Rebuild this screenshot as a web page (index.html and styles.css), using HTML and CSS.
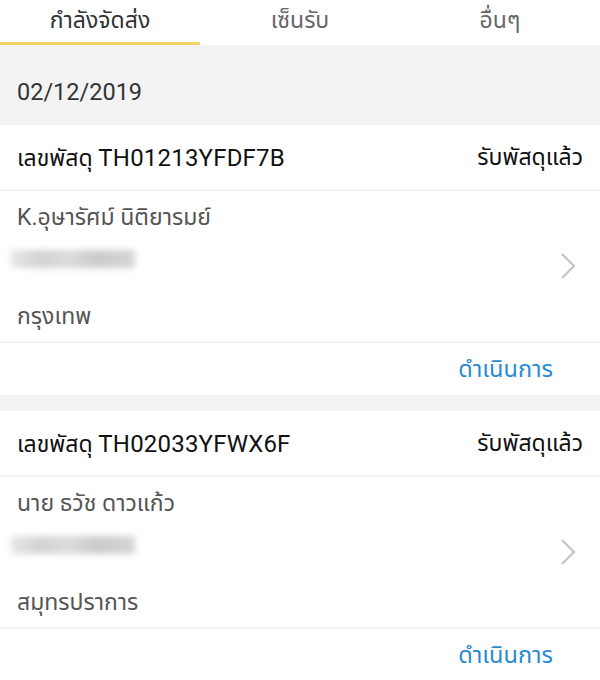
FILE: index.html
```html
<!DOCTYPE html>
<html lang="th">
<head>
    <meta charset="UTF-8">
    <meta name="viewport" content="width=device-width, initial-scale=1.0">
    <title>พัสดุ</title>
    <link rel="stylesheet" href="styles.css">
</head>
<body>
    <ul id="tabs">
        <li class="active">กำลังจัดส่ง</li>
        <li>เซ็นรับ</li>
        <li>อื่นๆ</li>
    </ul>

    <div class="date">02/12/2019</div>

    <div class="card">
        <div class="card-head">
            <span>เลขพัสดุ <b class="code">TH01213YFDF7B</b></span>
            <span>รับพัสดุแล้ว</span>
        </div>
        <div class="card-body">
            <div class="info">
                <p class="name">K.อุษารัศม์ นิติยารมย์</p>
                <div class="blur"></div>
                <p class="city">กรุงเทพ</p>
            </div>
            <svg class="arrow" width="20" height="30" viewBox="0 0 20 30">
                <path d="M4 3 L16 15 L4 27" fill="none" stroke="#c4c4c4" stroke-width="2.2"/>
            </svg>
        </div>
        <div class="card-foot"><a href="#">ดำเนินการ</a></div>
    </div>

    <div class="card">
        <div class="card-head">
            <span>เลขพัสดุ <b class="code">TH02033YFWX6F</b></span>
            <span>รับพัสดุแล้ว</span>
        </div>
        <div class="card-body">
            <div class="info">
                <p class="name">นาย ธวัช ดาวแก้ว</p>
                <div class="blur"></div>
                <p class="city">สมุทรปราการ</p>
            </div>
            <svg class="arrow" width="20" height="30" viewBox="0 0 20 30">
                <path d="M4 3 L16 15 L4 27" fill="none" stroke="#c4c4c4" stroke-width="2.2"/>
            </svg>
        </div>
        <div class="card-foot"><a href="#">ดำเนินการ</a></div>
    </div>
</body>
</html>
```

FILE: styles.css
```css
*{
    margin: 0;
    padding: 0;
}
body{
    background: #f3f3f3;
    font-family: Roboto, "Noto Sans Thai", "Noto Sans", "DejaVu Sans", sans-serif;
    color: #222;
}
#tabs{
    list-style: none;
    display: flex;
    background: #fff;
    height: 45px;
}
#tabs li{
    flex: 1;
    text-align: center;
    font-size: 23px;
    line-height: 41px;
    color: #666;
}
#tabs .active{
    color: #333;
    border-bottom: 3px solid #f5d26a;
}
.date{
    height: 66px;
    line-height: 66px;
    padding: 14px 0 0 17px;
    font-size: 23.5px;
    color: #333;
}
.card{
    background: #fff;
    margin-bottom: 16px;
}
.card-head{
    display: flex;
    justify-content: space-between;
    height: 64px;
    line-height: 66px;
    padding: 0 17px;
    font-size: 23px;
    color: #111;
    border-bottom: 2px solid #f3f3f3;
}
.card-head .code{
    font-weight: normal;
    font-size: 24px;
    letter-spacing: 0.2px;
}
.card-body{
    display: flex;
    align-items: center;
    justify-content: space-between;
    padding: 0 22px 0 17px;
    height: 150px;
    border-bottom: 2px solid #f3f3f3;
}
.info{
    display: flex;
    flex-direction: column;
    padding: 2px 0 0;
}
.name, .city{
    font-size: 23px;
    color: #555;
    line-height: 32px;
}
.blur{
    width: 124px;
    height: 18px;
    margin: 16px 0 33px -6px;
    background: linear-gradient(90deg, #e6e6e6 0, #d2d2d2 25%, #dcdcdc 45%, #cbcbcb 70%, #d6d6d6 100%);
    filter: blur(3px);
}
.arrow{
    display: block;
}
.card-foot{
    height: 52px;
    line-height: 52px;
    text-align: right;
    padding-right: 47px;
}
.card-foot a{
    font-size: 23.5px;
    color: #2a8bd2;
    text-decoration: none;
}
```
